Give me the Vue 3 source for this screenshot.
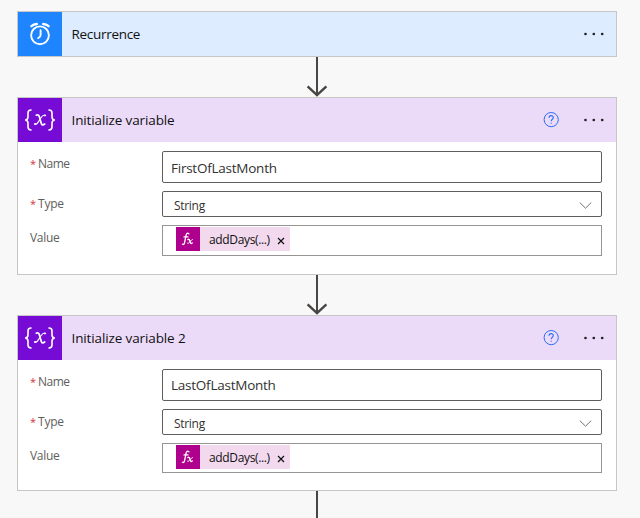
<script setup>
const variables = [
  { title: 'Initialize variable', name: 'FirstOfLastMonth', tall: true },
  { title: 'Initialize variable 2', name: 'LastOfLastMonth', tall: false },
]
</script>

<template>
  <main class="flow">
    <section class="card">
      <header class="head trigger">
        <div class="tile blue">
          <svg width="44" height="44" viewBox="0 0 44 44" fill="none" stroke="#fff">
            <circle cx="22" cy="23.3" r="8.9" stroke-width="1.9" />
            <path d="M22.6 18.2v4.9q0 2-2.4 3" stroke-width="1.9" stroke-linecap="round" />
            <path d="M13.4 14.2q2.2-2 5.4-2.2M30.6 14.2q-2.2-2-5.4-2.2" stroke-width="2.3" stroke-linecap="round" />
          </svg>
        </div>
        <span class="title">Recurrence</span>
        <svg class="dots" width="20" height="4" viewBox="0 0 20 4"><circle cx="1.5" cy="2" r="1.35" /><circle cx="9.8" cy="2" r="1.35" /><circle cx="18.2" cy="2" r="1.35" /></svg>
      </header>
    </section>

    <template v-for="v in variables" :key="v.title">
      <svg class="arrow" width="24" height="40" viewBox="0 0 24 40" fill="none" stroke="#484644">
        <path d="M12 0v38" stroke-width="2" />
        <path d="M2.6 29.3L12 38.2l9.4-8.9" stroke-width="2.4" />
      </svg>
      <section class="card">
        <header class="head action">
          <div class="tile purple">
            <svg width="44" height="44" viewBox="0 0 44 44" fill="none" stroke="#fff" stroke-linecap="round">
              <path d="M13 12c-2.4 0-3 .9-3 2.9v4c0 2-.8 2.9-2.8 3.1 2 .2 2.8 1.1 2.8 3.1v4c0 2 .6 2.9 3 2.9" stroke-width="1.6" />
              <path d="M31 12c2.4 0 3 .9 3 2.9v4c0 2 .8 2.9 2.8 3.1-2 .2-2.8 1.1-2.8 3.1v4c0 2-.6 2.9-3 2.9" stroke-width="1.6" />
              <path d="M18.2 17.2q2.3-1.3 3.1 1.4l2 6.8q.8 2.6 3.4.6" stroke-width="1.7" />
              <path d="M27.4 17.2q-2.4-.9-4.8 3.1l-1.9 3.1q-2.5 3.9-3.9 2.7" stroke-width="1.1" />
              <circle cx="27" cy="17.6" r=".6" /><circle cx="17" cy="26" r=".6" />
            </svg>
          </div>
          <span class="title">{{ v.title }}</span>
          <svg class="help" width="16" height="16" viewBox="0 0 16 16" fill="none" stroke="#2b6cf6">
            <circle cx="8.2" cy="7.6" r="7.1" stroke-width="1" />
            <path d="M6 5.7c.1-2.7 4.3-2.7 4.3-.1 0 1.7-2.1 1.7-2.1 3.7M8.2 10.7v1.1" stroke-width="1.1" />
          </svg>
          <svg class="dots" width="20" height="4" viewBox="0 0 20 4"><circle cx="1.5" cy="2" r="1.35" /><circle cx="9.8" cy="2" r="1.35" /><circle cx="18.2" cy="2" r="1.35" /></svg>
        </header>
        <div class="body" :class="{ tall: v.tall }">
          <div class="row">
            <label class="label"><span class="star">*</span><span>Name</span></label>
            <div class="field name"><span>{{ v.name }}</span></div>
          </div>
          <div class="row">
            <label class="label"><span class="star">*</span><span class="type">Type</span></label>
            <div class="field select">
              <span>String</span>
              <svg width="13" height="8" viewBox="0 0 13 8" fill="none" stroke="#605e5c"><path d="M.8 1.6l5.7 5.6 5.7-5.6" stroke-width=".9" /></svg>
            </div>
          </div>
          <div class="row">
            <label class="label"><span>Value</span></label>
            <div class="field value">
              <div class="chip">
                <div class="fx">
                  <svg width="24" height="24" viewBox="0 0 24 24" fill="none" stroke="#fff" stroke-linecap="round">
                    <path d="M12.9 6.8c-1.7-1.2-2.5-.2-2.9 1.7l-1.3 6.7c-.4 2-1.1 2.7-2.2 2.1M8 9.9h4" stroke-width="1.3" />
                    <path d="M11.9 12.6q1.2-.8 1.7.6l.9 2.5q.5 1.4 1.7.3" stroke-width="1.4" />
                    <path d="M16.6 12.5c-1.6-.5-3.2 4.7-5 3.8" stroke-width="1" />
                  </svg>
                </div>
                <span class="expr">addDays(...)</span>
                <svg class="close" width="8" height="8" viewBox="0 0 8 8" stroke="#111"><path d="M1 1l6 6M7 1L1 7" stroke-width="1.2" /></svg>
              </div>
            </div>
          </div>
        </div>
      </section>
    </template>
    <div class="tail"></div>
  </main>
</template>

<style>
body {
  margin: 0;
  background: #f8f8f8;
}
</style>

<style scoped>
.flow {
  box-sizing: border-box;
  width: 640px;
  height: 518px;
  overflow: hidden;
  padding: 11px 23px 0 17px;
  display: flex;
  flex-direction: column;
  align-items: center;
  background: #f8f8f8;
  font-family: "Open Sans", "Noto Sans", sans-serif;
  color: #111;
}
.card {
  box-sizing: border-box;
  width: 600px;
  flex: none;
  border: 1px solid #c8c6c4;
  background: #fff;
}
.head {
  display: flex;
  align-items: center;
  height: 44px;
  padding-right: 12px;
}
.trigger { background: #deecff; }
.action { background: #ebdbf8; }
.tile { width: 44px; height: 44px; }
.tile svg { display: block; }
.blue { background: #1e85ff; }
.purple { background: #770bd6; }
.title {
  flex: 1;
  margin-left: 9.5px;
  font-size: 13.5px;
  letter-spacing: -0.3px;
  line-height: 20px;
  white-space: nowrap;
}
.action .title { letter-spacing: -0.12px; }
.dots { fill: #222; }
.help { margin-right: 25px; }
.arrow { flex: none; display: block; }
.body {
  display: flex;
  flex-direction: column;
  gap: 8px;
  padding: 9px 14px 17px 12px;
}
.body.tall { padding-bottom: 18px; }
.row { display: flex; align-items: flex-start; }
.label {
  display: flex;
  width: 132px;
  font-size: 12px;
  letter-spacing: -0.5px;
  line-height: 26px;
  color: #605e5c;
}
.body:not(.tall) .label { line-height: 25px; }
.label .type { letter-spacing: -0.2px; }
.row:last-child .label { letter-spacing: -0.3px; }
.star {
  width: 8px;
  font-size: 11px;
  color: #d13438;
}
.field {
  box-sizing: border-box;
  width: 440px;
  display: flex;
  align-items: center;
  border: 1px solid #605e5c;
  border-radius: 2px;
  color: #323130;
}
.name {
  height: 32px;
  padding: 2px 8px 0;
  font-size: 13.5px;
  letter-spacing: -0.24px;
}
.body:not(.tall) .name { padding-top: 0; }
.select {
  height: 26px;
  padding: 2px 9px 0 11px;
  justify-content: space-between;
  font-size: 12px;
  letter-spacing: -0.3px;
}
.value {
  height: 30px;
  align-items: flex-start;
  padding: 1px 13px;
  border-color: #979593;
  border-radius: 0;
}
.tall .value { height: 31px; }
.chip {
  display: flex;
  align-items: center;
  width: 114px;
  height: 24px;
  background: #f2d9ee;
}
.fx { width: 24px; height: 24px; background: #ae008c; }
.fx svg { display: block; }
.expr {
  width: 68px;
  margin-left: 9px;
  padding-top: 2px;
  font-size: 12px;
  letter-spacing: -0.35px;
  line-height: 24px;
  color: #111;
  white-space: nowrap;
}
.close { margin-top: 3px; }
.tail {
  width: 2px;
  height: 27px;
  flex: none;
  background: #484644;
}
</style>
